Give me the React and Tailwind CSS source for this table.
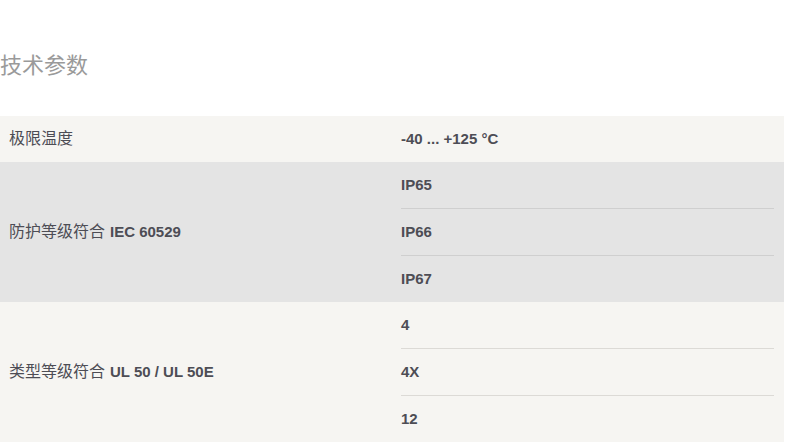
import React from 'react';

const rows = [
    { cn: '极限温度', en: '', values: ['-40 ... +125 °C'], bg: 'bg-[#f6f5f2]', line: 'border-[#dcdad6]' },
    { cn: '防护等级符合', en: 'IEC 60529', values: ['IP65', 'IP66', 'IP67'], bg: 'bg-[#e4e4e4]', line: 'border-[#cfcfcf]' },
    { cn: '类型等级符合', en: 'UL 50 / UL 50E', values: ['4', '4X', '12'], bg: 'bg-[#f6f5f2]', line: 'border-[#dcdad6]' },
];

export default function App() {
    return (
        <div className="w-[785px] h-[442px] overflow-hidden bg-white font-['Liberation_Sans','Noto_Sans_CJK_SC',sans-serif]">
            <div className="h-[116px] pt-[52px]">
                <h2 className="text-[22px] leading-[28px] text-[#9a9a9a] font-normal">技术参数</h2>
            </div>

            {/* Spec table */}
            <div className="w-[784px]">
                {rows.map((row, idx) => (
                    <div key={idx} className={`${row.bg} grid grid-cols-[391px_1fr]`}>
                        <div className="flex items-center pl-[9px] text-[15px] text-[#4d4d55]">
                            <span className="font-normal text-[16px]">{row.cn}</span>
                            {row.en && <span className="font-bold ml-[5px]">{row.en}</span>}
                        </div>
                        <div className="pl-[10px] pr-[10px]">
                            {row.values.map((v, i) => (
                                <div
                                    key={i}
                                    className={`h-[46px] flex items-center text-[15px] font-bold text-[#4d4d55] ${i > 0 ? `border-t ${row.line} h-[47px]` : ''}`}
                                >
                                    {v}
                                </div>
                            ))}
                        </div>
                    </div>
                ))}
            </div>
        </div>
    );
}
